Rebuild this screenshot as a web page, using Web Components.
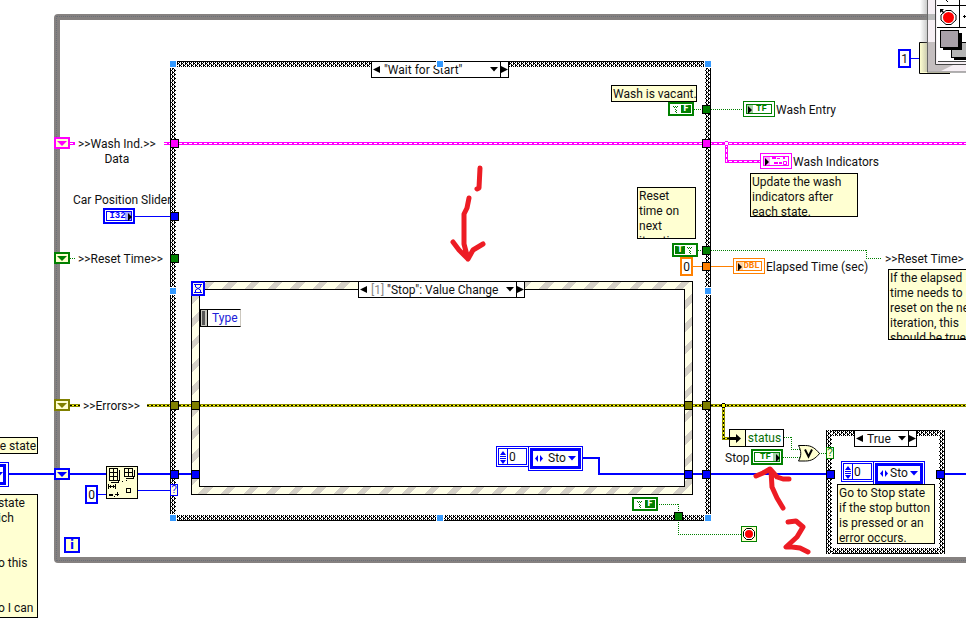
<!DOCTYPE html>
<html lang="en">
<head>
<meta charset="utf-8">
<title>Car wash block diagram</title>
<style>
  html, body { margin: 0; min-height: 100vh; background: #fff; overflow: hidden; }
  body { font: 12px/15px Roboto, "Open Sans", sans-serif; color: #111; }
</style>
</head>
<body>
<block-diagram>
  <loop-frame x="54" y="14" h="549"></loop-frame>
  <case-frame x="170" y="61" w="541" h="460"></case-frame>
  <event-frame x="191" y="281" w="502" h="214"></event-frame>
  <case-frame x="826" y="430" w="119" h="124"></case-frame>
  <wire-layer></wire-layer>

  <shift-register x="54" y="137" color="#ff00ff"></shift-register>
  <shift-register x="54" y="252" color="#008000"></shift-register>
  <shift-register x="54" y="399" color="#808000"></shift-register>
  <shift-register x="54" y="468" color="#0000ff"></shift-register>

  <wire-tunnel x="170" y="139" color="#ff00ff"></wire-tunnel>
  <wire-tunnel x="170" y="212" color="#0000ff"></wire-tunnel>
  <wire-tunnel x="170" y="254" color="#008000"></wire-tunnel>
  <wire-tunnel x="170" y="401" color="#808000"></wire-tunnel>
  <wire-tunnel x="170" y="470" color="#0000ff"></wire-tunnel>
  <wire-tunnel x="191" y="401" color="#808000"></wire-tunnel>
  <wire-tunnel x="191" y="470" color="#0000ff"></wire-tunnel>
  <wire-tunnel x="684" y="401" color="#808000"></wire-tunnel>
  <wire-tunnel x="684" y="470" color="#0000ff"></wire-tunnel>
  <wire-tunnel x="702" y="105" color="#008000"></wire-tunnel>
  <wire-tunnel x="702" y="139" color="#ff00ff"></wire-tunnel>
  <wire-tunnel x="702" y="246" color="#008000"></wire-tunnel>
  <wire-tunnel x="702" y="262" color="#ff8000"></wire-tunnel>
  <wire-tunnel x="702" y="401" color="#808000"></wire-tunnel>
  <wire-tunnel x="702" y="470" color="#0000ff"></wire-tunnel>
  <wire-tunnel x="674" y="512" color="#008000"></wire-tunnel>
  <wire-tunnel x="826" y="470" color="#0000ff"></wire-tunnel>
  <wire-tunnel x="936" y="470" color="#0000ff"></wire-tunnel>

  <case-selector x="371" y="61" w="138" name="Wash state case">"Wait for Start"</case-selector>
  <case-selector x="358" y="281" w="167" name="Event case" index="[1]">"Stop": Value Change</case-selector>
  <case-selector x="854" y="430" w="63" name="Error case">True</case-selector>
  <resize-handle x="170" y="61"></resize-handle>
  <resize-handle x="437" y="61"></resize-handle>
  <resize-handle x="705" y="61"></resize-handle>
  <resize-handle x="170" y="288"></resize-handle>
  <resize-handle x="705" y="288"></resize-handle>
  <resize-handle x="170" y="515"></resize-handle>
  <resize-handle x="437" y="515"></resize-handle>
  <resize-handle x="705" y="515"></resize-handle>

  <node-label x="78" y="137" center>&gt;&gt;Wash Ind.&gt;&gt;<br>Data</node-label>
  <node-label x="73" y="193">Car Position Slider</node-label>
  <node-label x="78" y="252">&gt;&gt;Reset Time&gt;&gt;</node-label>
  <node-label x="83" y="399">&gt;&gt;Errors&gt;&gt;</node-label>
  <node-label x="776" y="103">Wash Entry</node-label>
  <node-label x="793" y="155">Wash Indicators</node-label>
  <node-label x="766" y="260">Elapsed Time (sec)</node-label>
  <node-label x="885" y="252">&gt;&gt;Reset Time&gt;</node-label>
  <node-label x="725" y="451">Stop</node-label>

  <note-box x="611" y="85" w="86" h="17">Wash is vacant.</note-box>
  <note-box x="750" y="173" w="108" h="44">Update the wash<br>indicators after<br>each state.</note-box>
  <note-box x="637" y="187" w="59" h="52">Reset<br>time on<br>next<br>iteration</note-box>
  <note-box x="888" y="269" w="90" h="71">If the elapsed<br>time needs to<br>reset on the next<br>iteration, this<br>should be true</note-box>
  <note-box x="-40" y="437" w="78" h="17" end>te state</note-box>
  <note-box x="-4" y="494" w="42" h="124">state<br>ich<br><br><br>o this<br><br><br>o I can</note-box>

  <io-terminal x="103" y="208" color="#0000ff" kind="control">I32</io-terminal>
  <io-terminal x="743" y="101" color="#008000" kind="indicator">TF</io-terminal>
  <io-terminal x="760" y="153" color="#ff00ff" kind="indicator" cluster></io-terminal>
  <io-terminal x="733" y="258" color="#ff8000" kind="indicator">DBL</io-terminal>
  <io-terminal x="751" y="449" color="#008000" kind="control">TF</io-terminal>

  <bool-constant x="668" y="102" value="F"></bool-constant>
  <bool-constant x="672" y="243" value="T"></bool-constant>
  <bool-constant x="632" y="497" value="F"></bool-constant>

  <number-constant x="680" y="257" color="#ff8000" value="0" name="Elapsed time constant"></number-constant>
  <number-constant x="85" y="485" color="#0000ff" value="0" name="Array index constant"></number-constant>
  <number-constant x="898" y="49" color="#0000ff" value="1" name="Wait constant"></number-constant>

  <enum-array x="496" y="446" name="Next state"></enum-array>
  <enum-array x="841" y="461" name="Stop state" compact></enum-array>
  <note-box x="837" y="484" w="98" h="60">Go to Stop state<br>if the stop button<br>is pressed or an<br>error occurs.</note-box>
  <selector-terminal x="170" y="484" color="#0000ff"></selector-terminal>
  <selector-terminal x="826" y="447" color="#008000"></selector-terminal>
  <event-data x="200" y="309">Type</event-data>
  <unbundle-node x="729" y="429">status</unbundle-node>
  <iteration-terminal x="64" y="537">i</iteration-terminal>
  <symbol-layer></symbol-layer>
</block-diagram>

<script>
class DiagramPart extends HTMLElement {
  connectedCallback() {
    const px = { x: 'left', y: 'top', w: 'width', h: 'height' };
    for (const k in px) if (this.hasAttribute(k)) this.style[px[k]] = this.getAttribute(k) + 'px';
    if (this.hasAttribute('color')) this.style.setProperty('--c', this.getAttribute('color'));
    if (this.shadowRoot) return;
    this.attachShadow({ mode: 'open' }).innerHTML =
      '<style>:host{display:block;position:absolute;box-sizing:border-box}*{box-sizing:border-box}' +
      this.css() + '</style>' + this.html();
  }
  css() { return ''; }
  html() { return '<slot></slot>'; }
}
const part = (name, css, html) => customElements.define(name, class extends DiagramPart {
  css() { return css; }
  html() { return typeof html === 'function' ? html(this) : (html ?? '<slot></slot>'); }
});

part('block-diagram', ':host{position:relative;width:100%;height:100vh;min-height:618px;overflow:hidden}');

part('loop-frame', `:host{right:-12px;border:6px solid #858180;border-radius:4px}
  :host::after{content:"";position:absolute;inset:-4px;border:1px dotted #6c7078;pointer-events:none}`, '');

/* Four dithered edges around a white interior. */
part('case-frame', `:host{display:grid;grid-template:6px 1fr 6px / 6px 1fr 6px;border:0}
  i{background-color:#000;
  background-image:url("data:image/svg+xml,%3Csvg xmlns='http://www.w3.org/2000/svg' width='4' height='4' shape-rendering='crispEdges'%3E%3Cpath fill='%23fff' d='M0 0h1v1h-1zM2 0h1v1h-1zM1 1h2v1h-2zM0 2h1v1h-1zM2 2h1v1h-1zM0 3h1v1h-1zM3 3h1v1h-1z'/%3E%3C/svg%3E")}
  .t{grid-area:1/1/2/4;border-top:1px solid #000}.b{grid-area:3/1/4/4;border-bottom:1px solid #000}
  .l{grid-area:1/1/4/2;border-left:1px solid #000}.r{grid-area:1/3/4/4;border-right:1px solid #000}
  .m{grid-area:2/2/3/3;background:#fff}`,
  '<i class="t"></i><i class="b"></i><i class="l"></i><i class="r"></i><div class="m"></div>');

part('event-frame', `:host{border:1px solid #000;padding:7px;
  background:repeating-linear-gradient(135deg,#ffffe8 0 10px,#d4d0c6 10px 16px)}
  div{height:100%;background:#fff;border:1px solid #000}`, '<div></div>');

part('shift-register', `:host{width:16px;height:12px;border:2px solid var(--c);background:#ffffd0}
  svg{display:block;margin:auto}`, `<svg width="12" height="8"><path d="M1 2h10l-5 5z" fill="var(--c)"/></svg>`);

part('wire-tunnel', ':host{width:9px;height:9px;border:1px solid #000;background:var(--c)}', '');

part('resize-handle', ':host{width:6px;height:6px;background:#3399ff;outline:1px solid #fff}', '');

part('case-selector', `:host{display:flex;height:17px;border:1px solid #000;background:#fff}
  button{flex:none;width:8px;padding:0;border:0;background:#fff;display:flex;align-items:center;justify-content:center}
  button:first-child{border-right:1px solid #000}button:last-child{border-left:1px solid #000}
  .pick{flex:1;display:flex;position:relative;min-width:0}
  label{color:#888;padding:1px 0 0 4px;line-height:15px}
  select{flex:1;min-width:0;appearance:none;border:0;background:transparent;color:#111;font:inherit;line-height:15px;height:16px;padding:1px 0 0 4px;margin:0}
  label + select{padding-left:3px}
  .pick svg{position:absolute;right:2px;top:5px;pointer-events:none}`,
  el => `<button aria-label="Previous case"><svg width="7" height="9"><path d="M7 1v7L0 4.500z"/></svg></button>
  <div class="pick">${el.hasAttribute('index') ? `<label for="s">${el.getAttribute('index')}</label>` : ''}
  <select id="s" aria-label="${el.getAttribute('name')}"><option>${el.textContent}</option></select>
  <svg width="8" height="5"><path d="M0 0h8L4 4.500z"/></svg></div>
  <button aria-label="Next case"><svg width="7" height="9"><path d="M0 1v7L7 4.500z"/></svg></button>`);

part('node-label', ':host{white-space:nowrap}:host([center]){text-align:center}');

part('note-box', `:host{border:1px solid #000;background:#ffffd2;padding:1px 1px 0;overflow:hidden;white-space:nowrap}
  :host([end]){text-align:right}`);

part('io-terminal', `:host{width:32px;height:16px;border:1px solid var(--c);background:#fff;padding:2px}
  :host([kind=control]){border-width:2px;padding:1px}
  .in{position:relative;height:100%;border:1px solid var(--c);display:flex;align-items:center;justify-content:center;
    color:var(--c);font:bold 9px/10px "Liberation Mono",monospace}
  :host([kind=control]) .in{padding-right:3px}:host([kind=indicator]) .in{padding-left:5px}
  .shade{position:absolute;top:-1px;bottom:-1px;width:7px;background:var(--c);opacity:.35}
  .tip{position:absolute;top:1px}
  :host([kind=control]) .shade{right:-1px}:host([kind=control]) .tip{right:-1px}
  :host([kind=indicator]) .shade{left:-1px}:host([kind=indicator]) .tip{left:1px}`,
  el => `<div class="in">${el.hasAttribute('cluster')
    ? '<svg width="18" height="8" fill="var(--c)"><path d="M2 0h4v2H2zM7 1h3v1H7zM13 0h2v2h-2zM4 5h4v2H4zM9 5h3v2H9z"/><path d="M13.500 4.500h3v3h-3z" fill="none" stroke="var(--c)"/></svg>'
    : '<slot></slot>'}<i class="shade"></i><svg class="tip" width="4" height="8"><path d="M0 0v8L4 4z"/></svg></div>`);

part('bool-constant', `:host{width:26px;height:14px;border:2px solid #008000;background:#fff;padding:1px}
  button{display:flex;width:100%;height:100%;padding:0;border:0;background:#fff;color:#008000;font:bold 8px/8px "DejaVu Sans",sans-serif}
  span{flex:1;display:flex;align-items:center;justify-content:center}
  .on{background:#008000;color:#fff}`,
  el => {
    const v = el.getAttribute('value');
    const ghost = '<span><svg width="6" height="7" fill="#008000"><path d="M0 0h1v1H0zM2 0h1v1H2zM4 0h1v1H4zM1 1h1v1H1zM3 1h1v1H3zM2 3h1v1H2zM3 4h1v1H3zM2 5h1v1H2zM3 6h1v1H3z"/></svg></span>';
    const on = `<span class="on">${v}</span>`;
    return `<button aria-label="Boolean constant ${v}">${v === 'T' ? on + ghost : ghost + on}</button>`;
  });

part('number-constant', `input{display:block;width:13px;height:19px;border:2px solid var(--c);background:#fff;padding:0;margin:0;
  font:inherit;color:#111;text-align:center;border-radius:0}`,
  el => `<input value="${el.getAttribute('value')}" aria-label="${el.getAttribute('name')}">`);

part('enum-array', `:host{display:flex;align-items:flex-start;color:#111}
  .idx{width:33px;height:21px;border:1px solid #00f;padding:1px;background:#fff}
  .idx div{height:100%;border:1px solid #00f;display:flex}
  .idx svg{flex:none;margin:0 1px}
  input{flex:1;min-width:0;border:0;border-left:1px solid #00f;padding:1px 0 0 1px;font:inherit;background:#fff;color:#111}
  .enum{width:55px;height:25px;margin-left:-1px;border:1px solid #00f;padding:1px;background:#fff}
  .enum div{position:relative;height:100%;border:3px solid #00f;display:flex}
  select{flex:1;appearance:none;border:0;padding:0 0 0 15px;margin:0;background:transparent;font:inherit;color:#111;min-width:0}
  .lr{position:absolute;left:2px;top:4px;pointer-events:none}.dn{position:absolute;right:2px;top:5px;pointer-events:none}
  :host([compact]) .enum{width:52px}:host([compact]) select{padding-left:12px}`,
  el => `<div class="idx"><div><svg width="6" height="17" fill="#00f"><path d="M3 2l3 4H0zM0 7h6v1H0zM0 9h6v1H0zM0 11h6l-3 4z"/></svg>
  <input value="0" aria-label="${el.getAttribute('name')} index"></div></div>
  <div class="enum"><div><svg class="lr" width="8" height="7" fill="#00f"><path d="M3 0v7L0 3.500zM5 0v7L8 3.500z"/></svg>
  <select aria-label="${el.getAttribute('name')}"><option>Sto</option></select>
  <svg class="dn" width="8" height="5" fill="#00f"><path d="M0 0h8L4 4.500z"/></svg></div></div>`);

part('selector-terminal', `:host{width:8px;height:12px;border:1px solid var(--c);background:#ffffe0;color:var(--c);
  font:10px/10px "Liberation Sans",sans-serif;text-align:center}`, '?');

part('event-data', `:host{display:flex;width:41px;height:18px;border:1px solid #000;border-right-color:#ccc8bf;background:#fff;color:#2020d8}
  i{width:7px;background:#c4c4bc;border-right:1px solid #000;padding:1px 2px 1px 1px}i::before{content:"";display:block;height:100%;background:#555}
  span{padding-left:4px;line-height:16px}`, '<i></i><span><slot></slot></span>');

part('unbundle-node', `:host{display:flex;width:55px;height:18px;border:1px solid #000;background:#fff;color:#087008}
  i{flex:none;width:16px;background:#ffffd0;border-right:1px solid #000}svg{display:block}
  span{flex:1;text-align:center;line-height:16px}`,
  '<i><svg width="15" height="16"><path d="M0 7h6V4l5 4.500-5 4.500v-3H0z"/></svg></i><span><slot></slot></span>');

part('iteration-terminal', `:host{width:16px;height:16px;border:2px solid #00f;background:#ffffd0;color:#00f;
  font:bold 12px/12px "DejaVu Sans",sans-serif;text-align:center}`);

/* Wires: [type, path] pairs */
const wires = [
  ['pink', 'M70 143.500H75M164 143.500H2000M726.500 143.500V161.500H760'],
  ['err', 'M70 405.500H80M147 405.500H2000M723.500 405.500V438.500H729'],
  ['thick', 'M9 474H54M70 474H106M137 474H195M690 474H830M940 474H2000M583 458H599V474H690'],
  ['thin', 'M135 216.500H170M98 494.500H106M137 490.500H170M911 58.500H919'],
  ['dot', 'M70 258.500H75M694 109.500H703M711 109.500H743M698 250.500H703M711 250.500H866M866.500 250V258M866 258.500H882M659 504.500H678M678.500 504V534M678 534.500H741M784 437.500H791M791.500 437V449M791 449.500H800M783 457.500H800M819 453.500H826'],
  ['orange', 'M693 266.500H702M711 266.500H733'],
];
part('wire-layer', `:host{inset:0;pointer-events:none}svg{display:block;width:100%;height:100%}
  path{fill:none}.pink{stroke:#f0f;stroke-width:3}.pink2{stroke:#fff;stroke-dasharray:3 2}
  .err{stroke:#8c8c00;stroke-width:3}.err1{stroke:#ff0}.err2{stroke:#000;stroke-dasharray:2 2}
  .thick{stroke:#00f;stroke-width:2}.thin{stroke:#00f}.dot{stroke:#008000;stroke-dasharray:1 1}.orange{stroke:#ff8000}`,
  () => '<svg shape-rendering="crispEdges">' + wires.map(([t, d]) =>
    `<path class="${t}" d="${d}"/>` +
    (t === 'pink' ? `<path class="pink2" d="${d}"/>` : '') +
    (t === 'err' ? `<path class="err1" d="${d}"/><path class="err2" d="${d}"/>` : '')).join('') +
    '<circle cx="726.500" cy="143.500" r="2" fill="#fff" stroke="#f0f"/><circle cx="723.500" cy="405.500" r="2" fill="#ff0" stroke="#000"/></svg>');

part('symbol-layer', `:host{inset:0;pointer-events:none}svg{display:block;width:100%;height:100%}
  .ink{fill:none;stroke:#ed1c24;stroke-width:5;stroke-linecap:round;stroke-linejoin:round}`, `
<svg>
  <!-- timeout hourglass -->
  <g fill="none"><rect x="192" y="282" width="12" height="13" fill="#ffffe8" stroke="#00f" stroke-width="2"/>
  <path d="M194 284.500h8M194 292.500h8M195.500 285v2l5 3v2M200.500 285v2l-5 3v2" stroke="#00f"/></g>
  <!-- index array -->
  <rect x="106.500" y="466.500" width="31" height="32" fill="#ffffd2" stroke="#000"/>
  <g fill="none" stroke="#000" shape-rendering="crispEdges">
    <path d="M109.500 468.500h8v12h-8zM113.500 468v13M109 472.500h9M109 476.500h9M111 482.500h7v-2M119.500 470v10h-2"/>
    <path d="M124.500 468.500h8v8h-8zM128.500 468v9M124 472.500h9M126 478.500h7v-2M134.500 470v6h-2"/>
    <path d="M108.500 484v5M115.500 484v5M109 486.500h7M110.500 485v3M113.500 485v3M126.500 488.500h4v4h-4zM115 494.500h4M117.500 492v4"/>
    <path d="M109 495.500h4M109 494.500h4M114 496.500h1M122 481.500h1M126 480.500h1" /></g>
  <!-- or gate -->
  <path d="M798.500 445.500h7c6 0 10 3 14 8-4 5-8 7.500-14 7.500h-7c3-5 3-10 0-15.500z" fill="#ffffd0" stroke="#000"/>
  <path d="M805 449.500l3.500 7 3.500-7" fill="none" stroke="#000" stroke-width="2"/>
  <!-- loop stop -->
  <rect x="741.500" y="526.500" width="15" height="15" fill="#ffffd0" stroke="#008000"/>
  <path d="M746.500 528.500h5l3 3v5l-3 3h-5l-3-3v-5z" fill="#fff" stroke="#000"/><circle cx="749" cy="534" r="4" fill="#f00"/>
  <!-- clipped enum constant -->
  <g fill="#fff" stroke="#00f"><rect x="-20.500" y="462.500" width="29" height="24"/><rect x="-20.500" y="465.500" width="25" height="18" stroke-width="3"/>
  <path d="M-4 472h7l-3.500 4z" fill="#00f" stroke="none"/></g>
  <!-- tool palette -->
  <path d="M966 42.500h-46.500v31h30.500" fill="#ffffd0"/><path d="M966 42.500h-46.500v31H950" fill="none" stroke="#000"/>
  <defs><linearGradient id="g"><stop offset="0" stop-color="#888" stop-opacity="0"/><stop offset="1" stop-color="#888" stop-opacity=".5"/></linearGradient></defs>
  <rect x="920" y="0" width="8" height="72" fill="url(#g)"/>
  <rect x="927.500" y="-2" width="60" height="74" fill="#f6eff4" stroke="#666"/>
  <rect x="928" y="14" width="7" height="6" fill="#bbb"/>
  <path d="M928 42h7v22h20l-14 7h-13z" fill="#a9a3a3" opacity=".65"/>
  <path d="M935.500 0v64.500H966M938 61.500h28" fill="none" stroke="#444"/>
  <rect x="937" y="0" width="29" height="61" fill="#fff"/>
  <path d="M937 5.500h29M937 27.500h29M959.500 0v27M946 0l2 2" fill="none" stroke="#000"/>
  <path d="M946 10.500h5l5 4.500v5l-5 4.500h-5l-5-4.500v-5z" fill="#fff" stroke="#000"/><circle cx="948.500" cy="17.500" r="5.500" fill="#f00"/>
  <path d="M940 9h4l-1.500 1.500 2 2-1 1-2-2L940 13zM963 16h3v1h-3zM964 15h1v3h-1z"/>
  <path d="M954 45h14v15h-14z" fill="#000"/><rect x="951.500" y="42.500" width="18" height="15" fill="#b4b4b4" stroke="#000"/>
  <path d="M943 33h19v17h-19z"/><rect x="940.500" y="30.500" width="18" height="17" fill="#a8a0a8" stroke="#000"/>
  <!-- ink annotations -->
  <path class="ink" d="M480 168l-1 20-2 1M469 198l-2 10-3 6v30l4 15M453 242l6 8 9 9 5-9 10-6"/>
  <path class="ink" d="M756 476l7-3 7-4 7 8 6 2h6M771 471l1 16 5 11 6 10M788 522l8-1 7 6-6 10-11 10h6l8 1 8 4"/>
</svg>`);
</script>
</body>
</html>
